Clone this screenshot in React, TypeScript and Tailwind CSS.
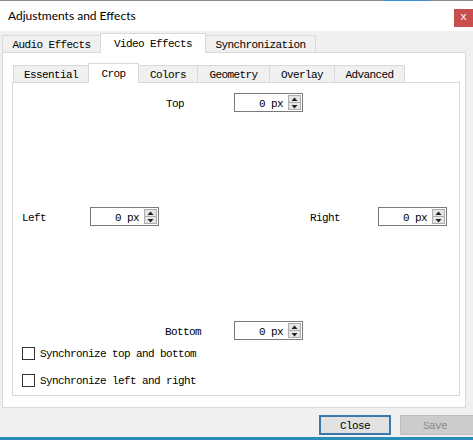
import React from "react";

const mono = { fontFamily: '"Liberation Mono", "DejaVu Sans Mono", monospace' };

function SpinBox() {
  return (
    <div className="flex h-[19px] w-[69px] shrink-0 items-center border border-[#7a7a7a] bg-white">
      <div className="flex h-full flex-1 items-center justify-end pr-[5px] pt-[3px]">0 px</div>
      <div className="mr-px flex h-[15px] w-[13px] flex-col">
        <div className="flex h-[8px] items-center justify-center border border-[#adadad] bg-[#e5e5e5]">
          <svg width="7" height="5" viewBox="0 0 7 5">
            <path d="M3.5 0.5 L6.5 4 L0.5 4 Z" fill="#222" />
          </svg>
        </div>
        <div className="-mt-px flex h-[8px] items-center justify-center border border-[#adadad] bg-[#e5e5e5]">
          <svg width="7" height="5" viewBox="0 0 7 5">
            <path d="M0.5 1 L6.5 1 L3.5 4.5 Z" fill="#222" />
          </svg>
        </div>
      </div>
    </div>
  );
}

function CheckRow({ label, mt }: { label: string; mt: string }) {
  return (
    <div className={`flex h-[16px] items-center ${mt}`}>
      <div className="ml-[9px] h-[13px] w-[13px] shrink-0 border border-[#333] bg-white" />
      <span className="ml-[5px] pt-[2px]">{label}</span>
    </div>
  );
}

export default function App() {
  const outerTabs = [
    { t: "Audio Effects", w: "w-[99px]" },
    { t: "Video Effects", w: "w-[106px]", sel: true },
    { t: "Synchronization", w: "w-[111px]" },
  ];
  const innerTabs = [
    { t: "Essential", w: "w-[76px]" },
    { t: "Crop", w: "w-[51px]", sel: true },
    { t: "Colors", w: "w-[60px]" },
    { t: "Geometry", w: "w-[73px]" },
    { t: "Overlay", w: "w-[66px]" },
    { t: "Advanced", w: "w-[71px]" },
  ];
  return (
    <div
      className="relative flex h-[440px] w-[473px] flex-col overflow-hidden bg-[#f0f0f0] text-[11px] tracking-[-0.6px] text-black"
      style={mono}
    >
      <div className="relative h-px w-full bg-[#8c8c8c]">
        <div className="absolute left-[384px] top-0 h-px w-[46px] bg-[#3b8ed4]" />
      </div>
      <div className="flex h-[30px] items-start justify-between bg-white">
        <span
          className="ml-[8px] mt-[6px] text-[12px] tracking-normal"
          style={{ fontFamily: 'Lato, "Noto Sans", sans-serif' }}
        >
          Adjustments and Effects
        </span>
        <div className="mt-[8px] flex h-[18px] w-[19px] items-center justify-center bg-[#c94f4f] pb-[2px] text-[11px] tracking-normal text-white">
          x
        </div>
      </div>
      <div className="ml-[2px] mt-[2px] flex h-[19px] items-end">
        {outerTabs.map((tab) => (
          <div
            key={tab.t}
            className={`-ml-px flex shrink-0 items-center justify-center border-x border-t border-[#d9d9d9] pt-[2px] first:ml-0 ${tab.w} ${
              tab.sel ? "relative z-10 -mb-px h-[20px] bg-white" : "h-[17px] bg-[#f0f0f0]"
            }`}
          >
            {tab.t}
          </div>
        ))}
      </div>
      <div className="ml-[2px] flex h-[356px] w-[464px] flex-col border border-[#d9d9d9] bg-white">
        <div className="ml-[10px] mt-[10px] flex h-[19px] items-end">
          {innerTabs.map((tab) => (
            <div
              key={tab.t}
              className={`-ml-px flex shrink-0 items-center justify-center border-x border-t border-[#d9d9d9] pt-[2px] first:ml-0 ${tab.w} ${
                tab.sel ? "relative z-10 -mb-px h-[20px] bg-white" : "h-[17px] bg-[#f0f0f0]"
              }`}
            >
              {tab.t}
            </div>
          ))}
        </div>
        <div className="ml-[9px] flex h-[314px] w-[448px] flex-col border border-[#d9d9d9] bg-white">
          <div className="mt-[10px] flex h-[19px] items-center">
            <span className="ml-[153px] w-[68px] shrink-0 pt-[4px]">Top</span>
            <SpinBox />
          </div>
          <div className="mt-[95px] flex h-[19px] items-center">
            <span className="ml-[9px] w-[68px] shrink-0 pt-[4px]">Left</span>
            <SpinBox />
            <span className="ml-[151px] w-[68px] shrink-0 pt-[4px]">Right</span>
            <SpinBox />
          </div>
          <div className="mt-[95px] flex h-[19px] items-center">
            <span className="ml-[152px] w-[69px] shrink-0 pt-[4px]">Bottom</span>
            <SpinBox />
          </div>
          <CheckRow label="Synchronize top and bottom" mt="mt-[5px]" />
          <CheckRow label="Synchronize left and right" mt="mt-[11px]" />
        </div>
      </div>
      <div className="mt-[7px] flex h-[20px] items-center">
        <div className="ml-[319px] flex h-[20px] w-[72px] shrink-0 items-center justify-center border-2 border-[#3a77ab] bg-[#e1e1e1] pt-[2px]">
          Close
        </div>
        <div className="ml-[9px] flex h-[20px] w-[80px] shrink-0 items-center justify-center border border-[#bfbfbf] bg-[#cccccc] pr-[10px] pt-[2px] text-[#8a8a8a]">
          Save
        </div>
      </div>
      <div className="mt-auto h-[3px] w-full bg-[#2a8db5]" />
    </div>
  );
}
